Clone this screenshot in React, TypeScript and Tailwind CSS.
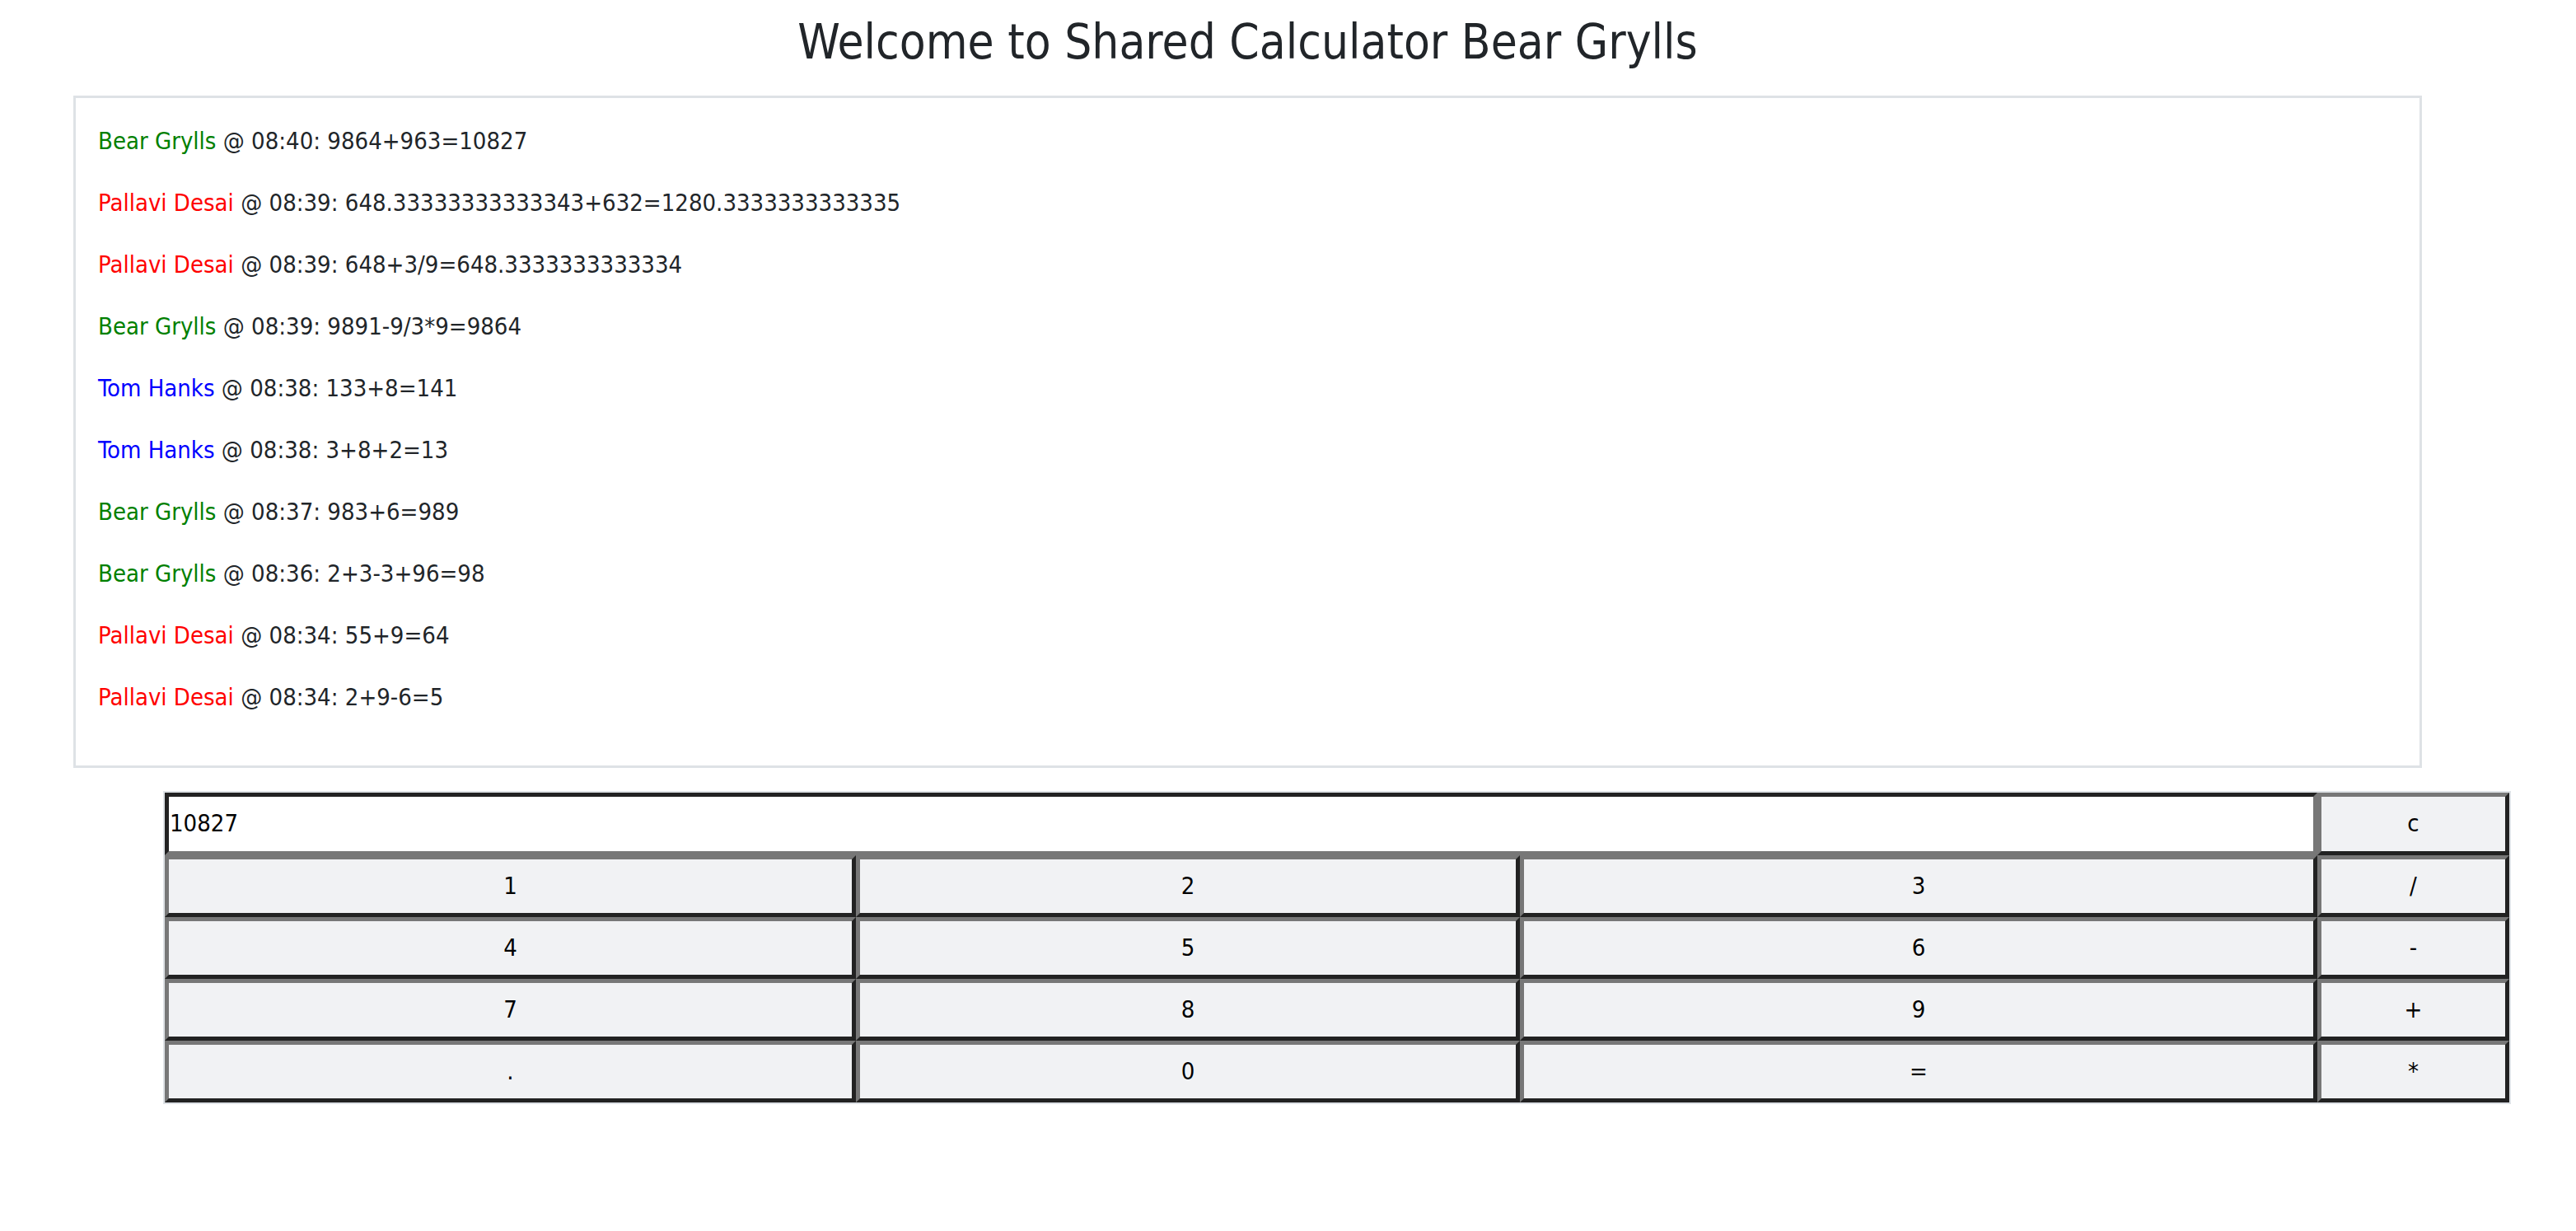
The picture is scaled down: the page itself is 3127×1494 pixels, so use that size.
import React from "react";

type Entry = { name: string; color: string; time: string; expr: string };

const entries: Entry[] = [
  { name: "Bear Grylls", color: "text-[#008000]", time: "08:40", expr: "9864+963=10827" },
  { name: "Pallavi Desai", color: "text-[#ff0000]", time: "08:39", expr: "648.33333333333343+632=1280.3333333333335" },
  { name: "Pallavi Desai", color: "text-[#ff0000]", time: "08:39", expr: "648+3/9=648.3333333333334" },
  { name: "Bear Grylls", color: "text-[#008000]", time: "08:39", expr: "9891-9/3*9=9864" },
  { name: "Tom Hanks", color: "text-[#0000ff]", time: "08:38", expr: "133+8=141" },
  { name: "Tom Hanks", color: "text-[#0000ff]", time: "08:38", expr: "3+8+2=13" },
  { name: "Bear Grylls", color: "text-[#008000]", time: "08:37", expr: "983+6=989" },
  { name: "Bear Grylls", color: "text-[#008000]", time: "08:36", expr: "2+3-3+96=98" },
  { name: "Pallavi Desai", color: "text-[#ff0000]", time: "08:34", expr: "55+9=64" },
  { name: "Pallavi Desai", color: "text-[#ff0000]", time: "08:34", expr: "2+9-6=5" },
];

const rows: string[][] = [
  ["1", "2", "3", "/"],
  ["4", "5", "6", "-"],
  ["7", "8", "9", "+"],
  [".", "0", "=", "*"],
];

const font = { fontFamily: '"DejaVu Sans Condensed", "DejaVu Sans", sans-serif', fontStretch: "condensed" } as React.CSSProperties;

function Key({ label }: { label: string }) {
  return (
    <button
      className="h-[75px] w-full bg-[#f1f2f4] text-black text-[29px] border-[5px] border-t-[#777777] border-l-[#777777] border-b-[#222222] border-r-[#222222] flex items-center justify-center"
      style={font}
    >
      {label}
    </button>
  );
}

export default function App() {
  return (
    <div className="min-h-[1494px] w-[3127px] bg-white text-[#212529]" style={font}>
      <div className="ml-[89px] w-[2851px]">
        <h1 className="pt-[16px] mb-[30px] text-center text-[58px] leading-[70px] font-normal">
          Welcome to Shared Calculator Bear Grylls
        </h1>
        <div className="border-[3px] border-[#dee2e6] pt-[30px] pb-[30px] pl-[27px] pr-[30px]">
          {entries.map((e, i) => (
            <p key={i} className="text-[29px] leading-[45px] mb-[30px]">
              <span className={e.color}>{e.name}</span> @ {e.time}: {e.expr}
            </p>
          ))}
        </div>
      </div>
      <div className="ml-[198px] mt-[28px] w-[2850px] border-2 border-[#dee2e6]">
        <div className="grid grid-cols-[839px_806px_968px_233px]">
          <div className="col-span-3 h-[76px] bg-white border-[5px] border-t-[#222222] border-l-[#222222] border-b-[#777777] border-r-[#777777] flex items-center pl-[1px]">
            <span className="text-[29px] text-black" style={font}>10827</span>
          </div>
          <button
            className="h-[76px] w-full bg-[#f1f2f4] text-black text-[29px] border-[5px] border-t-[#777777] border-l-[#777777] border-b-[#222222] border-r-[#222222] flex items-center justify-center"
            style={font}
          >
            c
          </button>
          {rows.map((r, ri) =>
            r.map((k, ki) => <Key key={`${ri}-${ki}`} label={k} />)
          )}
        </div>
      </div>
    </div>
  );
}
